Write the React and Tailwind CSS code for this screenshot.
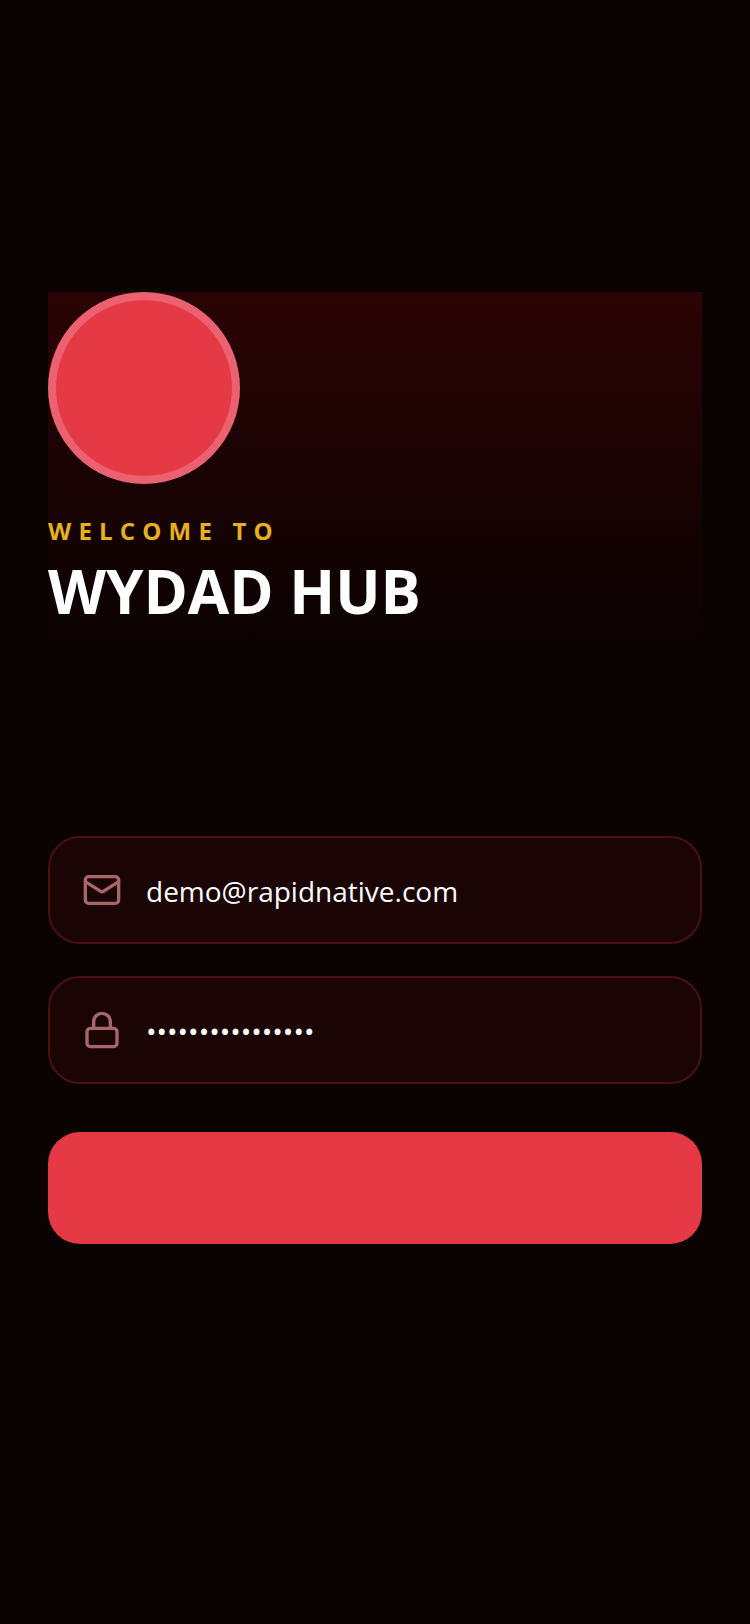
import { Lock, Mail } from 'lucide-react'

function Field({ icon: Icon, type, value }) {
  return (
    <div className="flex h-[108px] items-center rounded-[32px] border-2 border-[#4a1015] bg-[#1a0404] pl-[32px]">
      <Icon size={40} strokeWidth={2} className="shrink-0 text-[#a8666a]" />
      <input
        readOnly
        type={type}
        value={value}
        className="ml-[24px] w-full bg-transparent pt-[2px] text-[28px] text-white outline-none"
      />
    </div>
  )
}

export default function App() {
  return (
    <div className="min-h-[1624px] bg-[#0b0202] px-[48px] pt-[292px] font-['Open_Sans',sans-serif]">
      <div className="h-[356px] bg-gradient-to-b from-[#2b0304] to-[#0b0202]">
        <div className="h-[192px] w-[192px] rounded-full border-[8px] border-[#eb6170] bg-[#e63946]" />
        <p className="mt-[31px] text-[24px] font-bold leading-[32px] tracking-[0.3em] text-[#e6b01e]">WELCOME TO</p>
        <h1 className="mt-[8px] text-[60px] font-bold leading-[72px] text-white">WYDAD HUB</h1>
      </div>
      <div className="mt-[188px] flex flex-col gap-[32px]">
        <Field icon={Mail} type="text" value="demo@rapidnative.com" />
        <Field icon={Lock} type="password" value="password12345678" />
      </div>
      <div className="mt-[48px] h-[112px] rounded-[32px] bg-[#e63946]" />
    </div>
  )
}
